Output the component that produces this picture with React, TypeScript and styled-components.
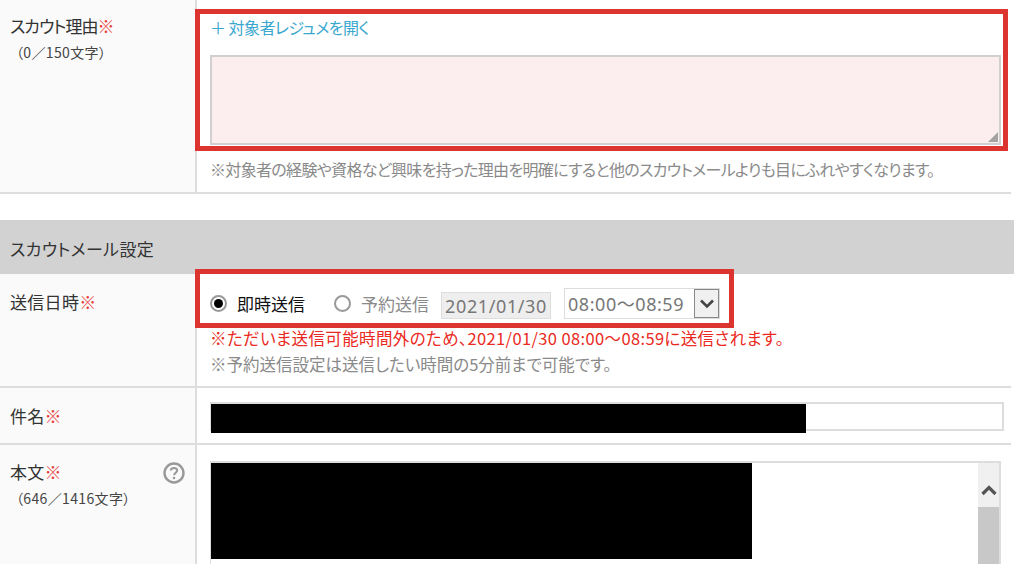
import React from 'react'
import styled, { createGlobalStyle } from 'styled-components'

const Global = createGlobalStyle`
  html, body { margin:0; padding:0; background:#fff; }
  body { font-family:"Noto Sans CJK JP","Liberation Sans",sans-serif; color:#333; font-feature-settings:"palt"; }
`

const Page = styled.div`
  position:relative;
  width:1014px;
  height:564px;
  overflow:hidden;
`

const Row = styled.div<{ $h: number }>`
  display:grid;
  grid-template-columns:197px 1fr;
  width:1011px;
  height:${p => p.$h}px;
  border-bottom:2px solid #ddd;
  box-sizing:border-box;
`

const LabelCell = styled.div<{ $top: number }>`
  position:relative;
  background:#fafafa;
  border-right:2px solid #ddd;
  padding:${p => p.$top}px 0 0 10px;
`

const Label = styled.div<{ $ls?: number }>`
  font-size:17px;
  line-height:24px;
  letter-spacing:${p => p.$ls ?? 0.3}px;
  color:#333;
`

const Required = styled.span`
  color:#e8413c;
`

const Count = styled.div`
  font-size:14px;
  line-height:18px;
  letter-spacing:0.35px;
  margin:5px 0 0 6px;
  color:#444;
`

const HelpIcon = styled.svg`
  position:absolute;
  top:17px;
  right:10px;
  width:22px;
  height:22px;
`

const ValueCell = styled.div<{ $top: number }>`
  padding:${p => p.$top}px 0 0 13px;
  min-width:0;
`

const OpenLink = styled.a`
  display:block;
  font-size:16px;
  line-height:22px;
  letter-spacing:-0.55px;
  color:#3aa7cf;
`

const ReasonBox = styled.div`
  position:relative;
  width:791px;
  height:90px;
  margin-top:17px;
`

const Reason = styled.textarea`
  display:block;
  width:100%;
  height:100%;
  box-sizing:border-box;
  border:2px solid #d0d0d0;
  background:#fceeee;
  resize:none;
  outline:none;
  padding:0;
`

const Grip = styled.svg`
  position:absolute;
  right:3px;
  bottom:3px;
  width:10px;
  height:10px;
`

const Note = styled.div<{ $mt?: number; $ls?: number; $size?: number }>`
  font-size:${p => p.$size ?? 16}px;
  line-height:22px;
  letter-spacing:${p => p.$ls ?? 0}px;
  color:#8a8a8a;
  margin-top:${p => p.$mt ?? 0}px;
  white-space:nowrap;
`

const Alert = styled(Note)`
  color:#ea2a22;
`

const Gap = styled.div`
  height:26px;
`

const SectionHead = styled.div`
  width:1014px;
  height:54px;
  background:#d2d2d2;
  padding-left:10px;
  box-sizing:border-box;
  font-size:17px;
  letter-spacing:0.35px;
  line-height:58px;
  color:#333;
`

const SendLine = styled.div`
  display:flex;
  align-items:center;
  height:31px;
`

const Radio = styled.span<{ $on?: boolean }>`
  flex:none;
  width:17px;
  height:17px;
  box-sizing:border-box;
  border-radius:50%;
  border:2px solid #999;
  background:#fff;
  display:flex;
  align-items:center;
  justify-content:center;
  &::after {
    content:"";
    width:9px;
    height:9px;
    border-radius:50%;
    background:${p => (p.$on ? '#000' : 'transparent')};
  }
`

const RadioText = styled.span<{ $off?: boolean; $mr: number }>`
  font-size:17px;
  line-height:24px;
  margin:0 ${p => p.$mr}px 0 10px;
  color:${p => (p.$off ? '#8a8a8a' : '#111')};
  white-space:nowrap;
`

const DateBox = styled.div`
  width:110px;
  height:27px;
  align-self:flex-end;
  box-sizing:border-box;
  border:1px solid #ddd;
  background:#eee;
  font-family:"Noto Sans","Liberation Sans",sans-serif;
  font-size:18px;
  letter-spacing:0.6px;
  line-height:26px;
  text-align:center;
  color:#777;
  margin-right:13px;
`

const TimeSelect = styled.div`
  display:flex;
  width:156px;
  height:31px;
  box-sizing:border-box;
  border:1px solid #ddd;
  background:#fff;
`

const TimeText = styled.span`
  flex:1;
  font-family:"Noto Sans","Noto Sans CJK JP",sans-serif;
  font-size:18px;
  letter-spacing:0.55px;
  line-height:30px;
  padding-left:3px;
  color:#777;
  white-space:nowrap;
`

const SelectArrow = styled.span`
  width:25px;
  box-sizing:border-box;
  border:1px solid #888;
  background:#f0f0f0;
  display:flex;
  align-items:center;
  justify-content:center;
`

const SubjectInput = styled.div`
  width:794px;
  height:29px;
  box-sizing:border-box;
  border:2px solid #ddd;
  border-left:1px solid #ddd;
  display:flex;
`

const Redacted = styled.div<{ $w: number; $h: number }>`
  width:${p => p.$w}px;
  height:${p => p.$h}px;
  flex:none;
  background:#000;
`

const BodyBox = styled.div`
  width:791px;
  height:130px;
  box-sizing:border-box;
  border:2px solid #ddd;
  border-left-width:1px;
  display:flex;
  justify-content:space-between;
`

const Scrollbar = styled.div`
  width:21px;
  display:flex;
  flex-direction:column;
`

const ScrollButton = styled.div`
  height:44px;
  box-sizing:border-box;
  padding-top:10px;
  background:#f0f0f0;
  display:flex;
  align-items:center;
  justify-content:center;
`

const ScrollThumb = styled.div`
  flex:1;
  background:#c8c8c8;
`

const Highlight = styled.div<{ $x: number; $y: number; $w: number; $h: number }>`
  position:absolute;
  left:${p => p.$x}px;
  top:${p => p.$y}px;
  width:${p => p.$w}px;
  height:${p => p.$h}px;
  box-sizing:border-box;
  border:5px solid #dc3530;
  pointer-events:none;
`

const App = () => (
  <Page>
    <Global />
    <Row $h={194}>
      <LabelCell $top={14}>
        <Label $ls={-1}>スカウト理由<Required>※</Required></Label>
        <Count>（0／150文字）</Count>
      </LabelCell>
      <ValueCell $top={16}>
        <OpenLink>＋ 対象者レジュメを開く</OpenLink>
        <ReasonBox>
          <Reason />
          <Grip viewBox="0 0 10 10"><path d="M10 0V10H0Z" fill="#a3a3a3" /></Grip>
        </ReasonBox>
        <Note $mt={13} $ls={-0.67}>※対象者の経験や資格など興味を持った理由を明確にすると他のスカウトメールよりも目にふれやすくなります。</Note>
      </ValueCell>
    </Row>
    <Gap />
    <SectionHead>スカウトメール設定</SectionHead>
    <Row $h={114}>
      <LabelCell $top={16}>
        <Label>送信日時<Required>※</Required></Label>
      </LabelCell>
      <ValueCell $top={14}>
        <SendLine>
          <Radio $on />
          <RadioText $mr={29}>即時送信</RadioText>
          <Radio />
          <RadioText $off $mr={12}>予約送信</RadioText>
          <DateBox>2021/01/30</DateBox>
          <TimeSelect>
            <TimeText>08:00～08:59</TimeText>
            <SelectArrow>
              <svg width="16" height="10" viewBox="0 0 16 10"><path d="M2 1.5L8 7.5L14 1.5" fill="none" stroke="#444" strokeWidth="2.6" /></svg>
            </SelectArrow>
          </TimeSelect>
        </SendLine>
        <Alert $mt={8} $size={16.5} $ls={0.37}>※ただいま送信可能時間外のため、2021/01/30 08:00～08:59に送信されます。</Alert>
        <Note $mt={4} $size={16.5}>※予約送信設定は送信したい時間の5分前まで可能です。</Note>
      </ValueCell>
    </Row>
    <Row $h={57}>
      <LabelCell $top={16}>
        <Label>件名<Required>※</Required></Label>
      </LabelCell>
      <ValueCell $top={14}>
        <SubjectInput>
          <Redacted $w={595} $h={29} />
        </SubjectInput>
      </ValueCell>
    </Row>
    <Row $h={130}>
      <LabelCell $top={15}>
        <Label>本文<Required>※</Required></Label>
        <Count>（646／1416文字）</Count>
        <HelpIcon viewBox="0 0 22 22">
          <circle cx="11" cy="11" r="9.5" fill="#fafafa" stroke="#999" strokeWidth="2.4" />
          <path d="M7.8 8.6C7.8 6.8 9.2 5.9 11 5.9C12.9 5.9 14.2 7 14.2 8.5C14.2 10.6 11.1 10.7 11.1 13.2" fill="none" stroke="#999" strokeWidth="2" />
          <circle cx="11" cy="16" r="1.3" fill="#999" />
        </HelpIcon>
      </LabelCell>
      <ValueCell $top={16}>
        <BodyBox>
          <Redacted $w={541} $h={96} />
          <Scrollbar>
            <ScrollButton>
              <svg width="16" height="11" viewBox="0 0 16 11"><path d="M1.5 9L8 2.5L14.5 9" fill="none" stroke="#555" strokeWidth="3.2" /></svg>
            </ScrollButton>
            <ScrollThumb />
          </Scrollbar>
        </BodyBox>
      </ValueCell>
    </Row>
    <Highlight $x={195} $y={9} $w={813} $h={142} />
    <Highlight $x={195} $y={269} $w={539} $h={59} />
  </Page>
)

export default App
